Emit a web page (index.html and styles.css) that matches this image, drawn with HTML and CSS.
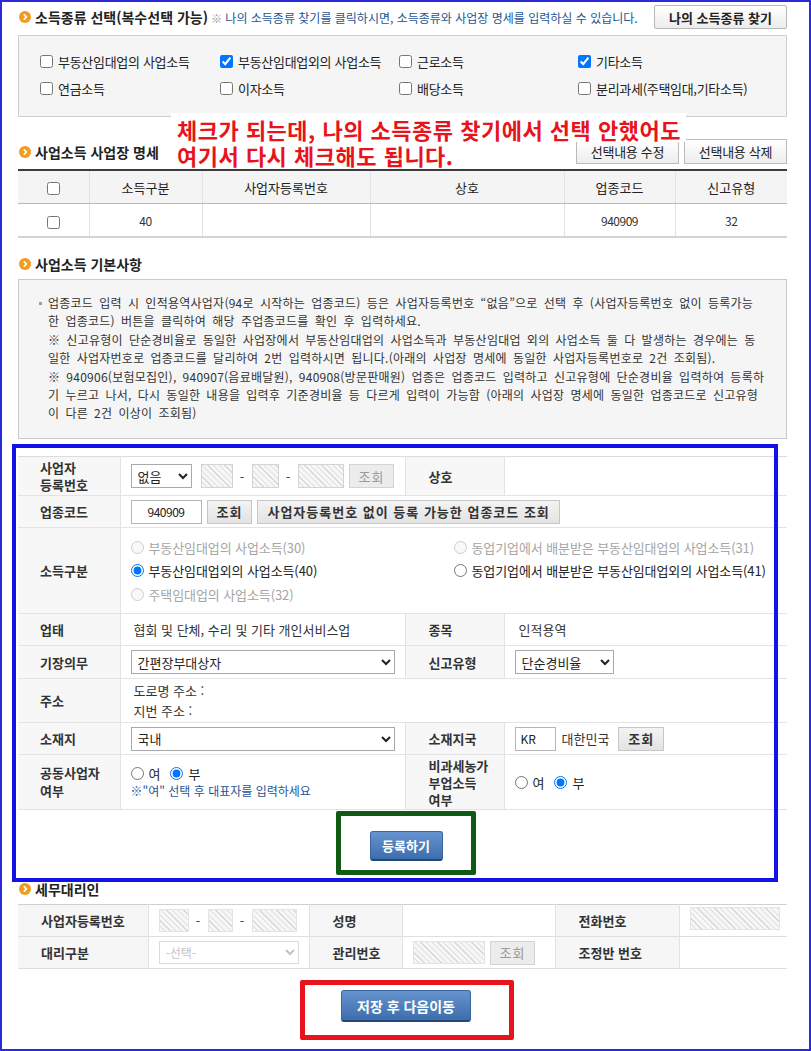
FILE: index.html
```html
<!DOCTYPE html>
<html lang="ko">
<head>
    <meta charset="UTF-8">
    <meta name="viewport" content="width=device-width, initial-scale=1.0">
    <title>사업소득 입력</title>
    <link rel="stylesheet" href="styles.css">
</head>
<body>
<div class="frame">
<div class="page">

    <!-- 소득종류 선택 -->
    <div class="head-row">
        <h2 class="sec-title">
            <svg class="ico" width="12" height="12" viewBox="0 0 12 12"><circle cx="6" cy="6" r="6" fill="#f29b1d"/><path d="M4.8 3.4 7.3 6 4.8 8.6" fill="none" stroke="#fff" stroke-width="1.7"/></svg>
            소득종류 선택(복수선택 가능)
        </h2>
        <span class="head-note"><span class="kome">※</span> 나의 소득종류 찾기를 클릭하시면, 소득종류와 사업장 명세를 입력하실 수 있습니다.</span>
        <button class="btn btn-find">나의 소득종류 찾기</button>
    </div>

    <div class="kind-box">
        <label class="chk"><input type="checkbox"> 부동산임대업의 사업소득</label>
        <label class="chk"><input type="checkbox" checked> 부동산임대업외의 사업소득</label>
        <label class="chk"><input type="checkbox"> 근로소득</label>
        <label class="chk"><input type="checkbox" checked> 기타소득</label>
        <label class="chk"><input type="checkbox"> 연금소득</label>
        <label class="chk"><input type="checkbox"> 이자소득</label>
        <label class="chk"><input type="checkbox"> 배당소득</label>
        <label class="chk"><input type="checkbox"> 분리과세(주택임대,기타소득)</label>
    </div>

    <!-- 빨간 메모 -->
    <div class="memo">
        <span class="memo-line first">체크가 되는데, 나의 소득종류 찾기에서 선택 안했어도</span>
        <span class="memo-line">여기서 다시 체크해도 됩니다.</span>
    </div>

    <!-- 사업장 명세 -->
    <div class="head-row head-row2">
        <h2 class="sec-title">
            <svg class="ico" width="12" height="12" viewBox="0 0 12 12"><circle cx="6" cy="6" r="6" fill="#f29b1d"/><path d="M4.8 3.4 7.3 6 4.8 8.6" fill="none" stroke="#fff" stroke-width="1.7"/></svg>
            사업소득 사업장 명세
        </h2>
        <div class="head-btns">
            <button class="btn btn-sel">선택내용 수정</button>
            <button class="btn btn-sel">선택내용 삭제</button>
        </div>
    </div>

    <table class="list-tbl">
        <colgroup>
            <col style="width:71px"><col style="width:113px"><col style="width:168px">
            <col style="width:194px"><col style="width:111px"><col style="width:112px">
        </colgroup>
        <thead>
            <tr>
                <th><input type="checkbox"></th>
                <th>소득구분</th>
                <th>사업자등록번호</th>
                <th>상호</th>
                <th>업종코드</th>
                <th>신고유형</th>
            </tr>
        </thead>
        <tbody>
            <tr>
                <td><input type="checkbox"></td>
                <td>40</td>
                <td></td>
                <td></td>
                <td>940909</td>
                <td>32</td>
            </tr>
        </tbody>
    </table>

    <!-- 기본사항 -->
    <h2 class="sec-title sec3">
        <svg class="ico" width="12" height="12" viewBox="0 0 12 12"><circle cx="6" cy="6" r="6" fill="#f29b1d"/><path d="M4.8 3.4 7.3 6 4.8 8.6" fill="none" stroke="#fff" stroke-width="1.7"/></svg>
        사업소득 기본사항
    </h2>

    <div class="info-box">
        <p><span class="bullet"></span>업종코드 입력 시 인적용역사업자(94로 시작하는 업종코드) 등은 사업자등록번호 “없음”으로 선택 후 (사업자등록번호 없이 등록가능<br>
        한 업종코드) 버튼을 클릭하여 해당 주업종코드를 확인 후 입력하세요.<br>
        ※ 신고유형이 단순경비율로 동일한 사업장에서 부동산임대업의 사업소득과 부동산임대업 외의 사업소득 둘 다 발생하는 경우에는 동<br>
        일한 사업자번호로 업종코드를 달리하여 2번 입력하시면 됩니다.(아래의 사업장 명세에 동일한 사업자등록번호로 2건 조회됨).<br>
        ※ 940906(보험모집인), 940907(음료배달원), 940908(방문판매원) 업종은 업종코드 입력하고 신고유형에 단순경비율 입력하여 등록하<br>
        기 누르고 나서, 다시 동일한 내용을 입력후 기준경비율 등 다르게 입력이 가능함 (아래의 사업장 명세에 동일한 업종코드로 신고유형<br>
        이 다른 2건 이상이 조회됨)</p>
    </div>

    <!-- 입력 폼 -->
    <div class="form-area">
        <table class="form-tbl">
            <colgroup>
                <col style="width:102px"><col style="width:285px"><col style="width:99px"><col style="width:283px">
            </colgroup>
            <tr class="r1">
                <th>사업자<br>등록번호</th>
                <td>
                    <div class="inline">
                        <select class="sel sel-none"><option>없음</option></select>
                        <span class="hatch" style="width:32px"></span><span class="dash">-</span>
                        <span class="hatch" style="width:27px"></span><span class="dash">-</span>
                        <span class="hatch" style="width:46px"></span>
                        <button class="btn btn-gray" disabled>조회</button>
                    </div>
                </td>
                <th class="th2">상호</th>
                <td></td>
            </tr>
            <tr class="r2">
                <th>업종코드</th>
                <td colspan="3">
                    <div class="inline">
                        <input class="txt txt-code" type="text" value="940909">
                        <button class="btn btn-gray">조회</button>
                        <button class="btn btn-gray">사업자등록번호 없이 등록 가능한 업종코드 조회</button>
                    </div>
                </td>
            </tr>
            <tr class="r3">
                <th>소득구분</th>
                <td colspan="3">
                    <div class="radio-grid">
                        <label class="rad off"><input type="radio" name="kind" disabled> 부동산임대업의 사업소득(30)</label>
                        <label class="rad off"><input type="radio" name="kind" disabled> 동업기업에서 배분받은 부동산임대업의 사업소득(31)</label>
                        <label class="rad"><input type="radio" name="kind" checked> 부동산임대업외의 사업소득(40)</label>
                        <label class="rad"><input type="radio" name="kind"> 동업기업에서 배분받은 부동산임대업외의 사업소득(41)</label>
                        <label class="rad off"><input type="radio" name="kind" disabled> 주택임대업의 사업소득(32)</label>
                    </div>
                </td>
            </tr>
            <tr class="r4">
                <th>업태</th>
                <td class="txt-cell">협회 및 단체, 수리 및 기타 개인서비스업</td>
                <th class="th2">종목</th>
                <td class="txt-cell2">인적용역</td>
            </tr>
            <tr class="r5">
                <th>기장의무</th>
                <td><select class="sel sel-wide"><option>간편장부대상자</option></select></td>
                <th class="th2">신고유형</th>
                <td class="td2"><select class="sel sel-type"><option>단순경비율</option></select></td>
            </tr>
            <tr class="r6">
                <th>주소</th>
                <td colspan="3" class="addr">도로명 주소 :<br>지번 주소 :</td>
            </tr>
            <tr class="r7">
                <th>소재지</th>
                <td><select class="sel sel-wide"><option>국내</option></select></td>
                <th class="th2">소재지국</th>
                <td class="td2">
                    <div class="inline">
                        <input class="txt txt-nation" type="text" value="KR">
                        <span class="nation">대한민국</span>
                        <button class="btn btn-gray">조회</button>
                    </div>
                </td>
            </tr>
            <tr class="r8">
                <th class="th-tall">공동사업자<br>여부</th>
                <td>
                    <div class="yn">
                        <label class="rad"><input type="radio" name="joint"> 여</label>
                        <label class="rad"><input type="radio" name="joint" checked> 부</label>
                    </div>
                    <p class="note">※"여" 선택 후 대표자를 입력하세요</p>
                </td>
                <th class="th2">비과세농가<br>부업소득<br>여부</th>
                <td class="td2">
                    <div class="yn">
                        <label class="rad"><input type="radio" name="farm"> 여</label>
                        <label class="rad"><input type="radio" name="farm" checked> 부</label>
                    </div>
                </td>
            </tr>
        </table>

        <div class="btn-row">
            <div class="mark mark-green">
                <button class="btn-blue btn-reg">등록하기</button>
            </div>
        </div>

        <div class="mark-blue"></div>
    </div>

    <!-- 세무대리인 -->
    <h2 class="sec-title sec5">
        <svg class="ico" width="12" height="12" viewBox="0 0 12 12"><circle cx="6" cy="6" r="6" fill="#f29b1d"/><path d="M4.8 3.4 7.3 6 4.8 8.6" fill="none" stroke="#fff" stroke-width="1.7"/></svg>
        세무대리인
    </h2>

    <table class="agent-tbl">
        <colgroup>
            <col style="width:130px"><col style="width:161px"><col style="width:93px">
            <col style="width:153px"><col style="width:124px"><col style="width:108px">
        </colgroup>
        <tr>
            <th>사업자등록번호</th>
            <td>
                <div class="inline">
                    <span class="hatch" style="width:30px"></span><span class="dash">-</span>
                    <span class="hatch" style="width:25px"></span><span class="dash">-</span>
                    <span class="hatch" style="width:45px"></span>
                </div>
            </td>
            <th>성명</th>
            <td></td>
            <th>전화번호</th>
            <td><span class="hatch" style="width:90px"></span></td>
        </tr>
        <tr>
            <th>대리구분</th>
            <td><select class="sel sel-agent" disabled><option>-선택-</option></select></td>
            <th>관리번호</th>
            <td>
                <div class="inline">
                    <span class="hatch" style="width:72px"></span>
                    <button class="btn btn-gray" disabled>조회</button>
                </div>
            </td>
            <th>조정반 번호</th>
            <td></td>
        </tr>
    </table>

    <div class="btn-row">
        <div class="mark mark-red">
            <button class="btn-blue btn-save">저장 후 다음이동</button>
        </div>
    </div>

</div>
</div>
</body>
</html>
```

FILE: styles.css
```css
body {
    margin: 0;
    font-family: "Noto Sans CJK KR", "Noto Sans", sans-serif;
    color: #333;
    background: #fff;
}

.frame {
    height: 1051px;
    box-sizing: border-box;
    border: 2px solid #2b2bdb;
    overflow: hidden;
}

.page {
    position: relative;
    padding: 0 22px 0 16px;
}

/* 섹션 제목 */
.sec-title {
    display: flex;
    align-items: center;
    gap: 4px;
    margin: 0;
    padding-left: 1px;
    font-size: 14px;
    font-weight: bold;
    color: #222;
    line-height: 16px;
    white-space: nowrap;
}

.ico {
    flex: none;
}

.head-row {
    display: flex;
    align-items: center;
    height: 24px;
    margin-top: 3px;
}

.head-note {
    margin-left: 3px;
    font-size: 12px;
    color: #1d5595;
    white-space: nowrap;
}

.kome {
    color: #999;
    font-size: 11px;
}

.btn {
    font-family: inherit;
    cursor: pointer;
}

.btn-find {
    margin-left: auto;
    width: 133px;
    height: 24px;
    padding: 0;
    border: 1px solid #b8b8b8;
    border-radius: 2px;
    background: linear-gradient(#ffffff, #ececec);
    font-size: 13px;
    font-weight: bold;
    color: #222;
}

/* 소득종류 체크박스 */
.kind-box {
    display: grid;
    grid-template-columns: 180px 179px 179px auto;
    grid-auto-rows: 20px;
    row-gap: 7px;
    height: 82px;
    box-sizing: border-box;
    margin-top: 6px;
    padding: 15px 0 0 21px;
    border: 1px solid #cfcfcf;
    background: #f5f5f5;
}

.chk {
    display: flex;
    align-items: center;
    gap: 5px;
    font-size: 13px;
    letter-spacing: -0.3px;
    color: #222;
    white-space: nowrap;
}

.chk input {
    margin: 0;
    width: 13px;
    height: 13px;
}

/* 빨간 메모 */
.memo {
    position: absolute;
    top: 108px;
    left: 169px;
    font-size: 22px;
    font-weight: bold;
    color: #e8131b;
    letter-spacing: 0.5px;
    white-space: nowrap;
    z-index: 2;
}

.memo-line {
    display: table;
    line-height: 26px;
    padding: 0 5px 0 6px;
    background: #fff;
}

.memo-line.first {
    padding-top: 3px;
}

/* 사업장 명세 */
.head-row2 {
    height: 25px;
    margin-top: 22px;
}

.head-btns {
    display: flex;
    gap: 5px;
    margin-left: auto;
}

.btn-sel {
    width: 103px;
    height: 25px;
    padding: 0;
    border: 1px solid #bbb;
    background: linear-gradient(#ffffff, #ededed);
    font-size: 13px;
    letter-spacing: -0.3px;
    color: #222;
}

.list-tbl {
    width: 769px;
    margin-top: 5px;
    border-collapse: collapse;
    table-layout: fixed;
    border-top: 2px solid #3c3c3c;
    border-bottom: 2px solid #d4d4d4;
    font-size: 13px;
}

.list-tbl th,
.list-tbl td {
    height: 32px;
    padding: 0;
    text-align: center;
    border-left: 1px solid #e2e2e2;
}

.list-tbl th:first-child,
.list-tbl td:first-child {
    border-left: none;
}

.list-tbl th {
    background: #f4f4f4;
    font-weight: normal;
    color: #222;
    border-bottom: 1px solid #b9b9b9;
}

.list-tbl td {
    font-size: 12px;
    letter-spacing: -0.5px;
}

.list-tbl input {
    margin: 0;
    width: 13px;
    height: 13px;
    vertical-align: middle;
}

/* 기본사항 */
.sec3 {
    margin-top: 18px;
}

.info-box {
    height: 160px;
    box-sizing: border-box;
    margin-top: 7px;
    padding: 14px 10px 0 29px;
    border: 1px solid #c9c9c9;
    background: #f5f5f5;
}

.info-box p {
    margin: 0;
    font-size: 12px;
    line-height: 18.4px;
    letter-spacing: 0.25px;
    word-spacing: 2.5px;
    color: #333;
    white-space: nowrap;
}

.bullet {
    display: inline-block;
    width: 3px;
    height: 3px;
    margin-left: -9px;
    margin-right: 6px;
    background: #a0a0a0;
    vertical-align: 3px;
}

/* 입력 폼 */
.form-area {
    position: relative;
    margin-top: 17px;
}

.form-tbl {
    width: 769px;
    border-collapse: collapse;
    table-layout: fixed;
    border-top: 1px solid #dcdcdc;
    font-size: 13px;
}

.form-tbl tr {
    border-bottom: 1px solid #e3e3e3;
}

.form-tbl th {
    padding: 0 0 0 22px;
    text-align: left;
    background: #f7f7f7;
    font-weight: bold;
    line-height: 17px;
    color: #333;
    border-right: 1px solid #e3e3e3;
}

.form-tbl .th2 {
    padding-left: 23px;
    border-left: 1px solid #e3e3e3;
}

.form-tbl .th-tall {
    line-height: 18px;
}

.form-tbl td {
    padding: 0 0 0 10px;
    vertical-align: middle;
}

.r1 { height: 39px; }
.r2 { height: 32px; }
.r3 { height: 86px; }
.r4 { height: 32px; }
.r5 { height: 33px; }
.r6 { height: 44px; }
.r7 { height: 32px; }
.r8 { height: 55px; }

.inline {
    display: flex;
    align-items: center;
    gap: 5px;
}

.sel {
    height: 24px;
    padding: 0 2px;
    border: 1px solid #a9a9a9;
    border-radius: 0;
    background: #fff;
    font-family: inherit;
    font-size: 13px;
    color: #222;
}

.sel-none {
    width: 61px;
    margin-right: 4px;
}

.sel-wide {
    width: 264px;
}

.sel-type {
    width: 99px;
}

.sel-agent {
    width: 140px;
    height: 23px;
    border-color: #ccc;
    color: #aaa;
    font-size: 12px;
}

.hatch {
    display: inline-block;
    height: 24px;
    box-sizing: border-box;
    border: 1px solid #d3d3d3;
    background: repeating-linear-gradient(45deg, #f6f6f6 0 3px, #d9d9d9 3px 4px);
}

.dash {
    width: 9px;
    text-align: center;
    font-size: 13px;
    color: #444;
}

.btn-gray {
    height: 24px;
    padding: 0 9px;
    border: 1px solid #c6c6c6;
    background: linear-gradient(#f3f3f3, #e3e3e3);
    font-size: 13px;
    font-weight: bold;
    color: #333;
    letter-spacing: 1px;
}

.btn-gray:disabled {
    color: #9a9a9a;
    font-weight: normal;
    background: #ececec;
    border-color: #d3d3d3;
}

.txt {
    height: 24px;
    box-sizing: border-box;
    border: 1px solid #b5b5b5;
    font-family: inherit;
    font-size: 12px;
    color: #222;
}

.txt-code {
    width: 71px;
    text-align: center;
    letter-spacing: -0.5px;
}

.txt-nation {
    width: 41px;
    padding-left: 5px;
}

.nation {
    margin: 0 4px 0 1px;
    font-size: 13px;
}

.radio-grid {
    display: grid;
    grid-template-columns: 323px auto;
    grid-auto-rows: 23.5px;
}

.rad {
    display: flex;
    align-items: center;
    gap: 5px;
    font-size: 13px;
    letter-spacing: -0.1px;
    color: #222;
    white-space: nowrap;
}

.rad.off {
    color: #a5a5a5;
}

.rad input {
    margin: 0;
    width: 13px;
    height: 13px;
}

.txt-cell {
    padding-left: 13px !important;
}

.txt-cell2 {
    padding-left: 14px !important;
}

.addr {
    padding-left: 13px !important;
    line-height: 20px;
}

.yn {
    display: flex;
    gap: 10px;
    height: 18px;
}

.note {
    margin: 0;
    font-size: 12px;
    line-height: 18px;
    color: #1d5595;
}

/* 등록 버튼과 표시 상자 */
.btn-row {
    display: flex;
    justify-content: center;
}

.mark {
    border: 5px solid;
    border-radius: 2px;
}

.mark-green {
    margin: 1px 0 0 6px;
    padding: 15px 28px 9px 29px;
    border-color: #0f5a14;
}

.mark-red {
    margin: 11px 0 0 9px;
    padding: 5px 38px 13px 36px;
    border-color: #e8131b;
}

.btn-blue {
    display: block;
    border: 1px solid #3a64a0;
    border-bottom: 2px solid #23477a;
    border-radius: 3px;
    background: linear-gradient(#6594cf, #3d6dab);
    font-family: inherit;
    font-weight: bold;
    color: #fff;
    cursor: pointer;
}

.btn-reg {
    width: 73px;
    height: 30px;
    font-size: 13px;
}

.btn-save {
    width: 130px;
    height: 32px;
    font-size: 14px;
}

.mark-blue {
    position: absolute;
    top: -12px;
    left: -6px;
    width: 766px;
    height: 438px;
    box-sizing: border-box;
    border: 4px solid #1212e6;
    pointer-events: none;
}

/* 세무대리인 */
.sec5 {
    margin-top: 6px;
}

.agent-tbl {
    width: 769px;
    margin-top: 7px;
    border-collapse: collapse;
    table-layout: fixed;
    border-top: 1px solid #d0d0d0;
    font-size: 13px;
}

.agent-tbl tr {
    height: 32px;
    border-bottom: 1px solid #dedede;
}

.agent-tbl th {
    padding: 0 0 0 23px;
    text-align: left;
    background: #f6f6f6;
    font-weight: bold;
    color: #333;
    border-right: 1px solid #e2e2e2;
    border-left: 1px solid #e2e2e2;
}

.agent-tbl th:first-child {
    border-left: none;
}

.agent-tbl td {
    padding: 0 0 0 10px;
}

.agent-tbl .hatch {
    height: 23px;
    border-color: #e4e4e4;
}
```
